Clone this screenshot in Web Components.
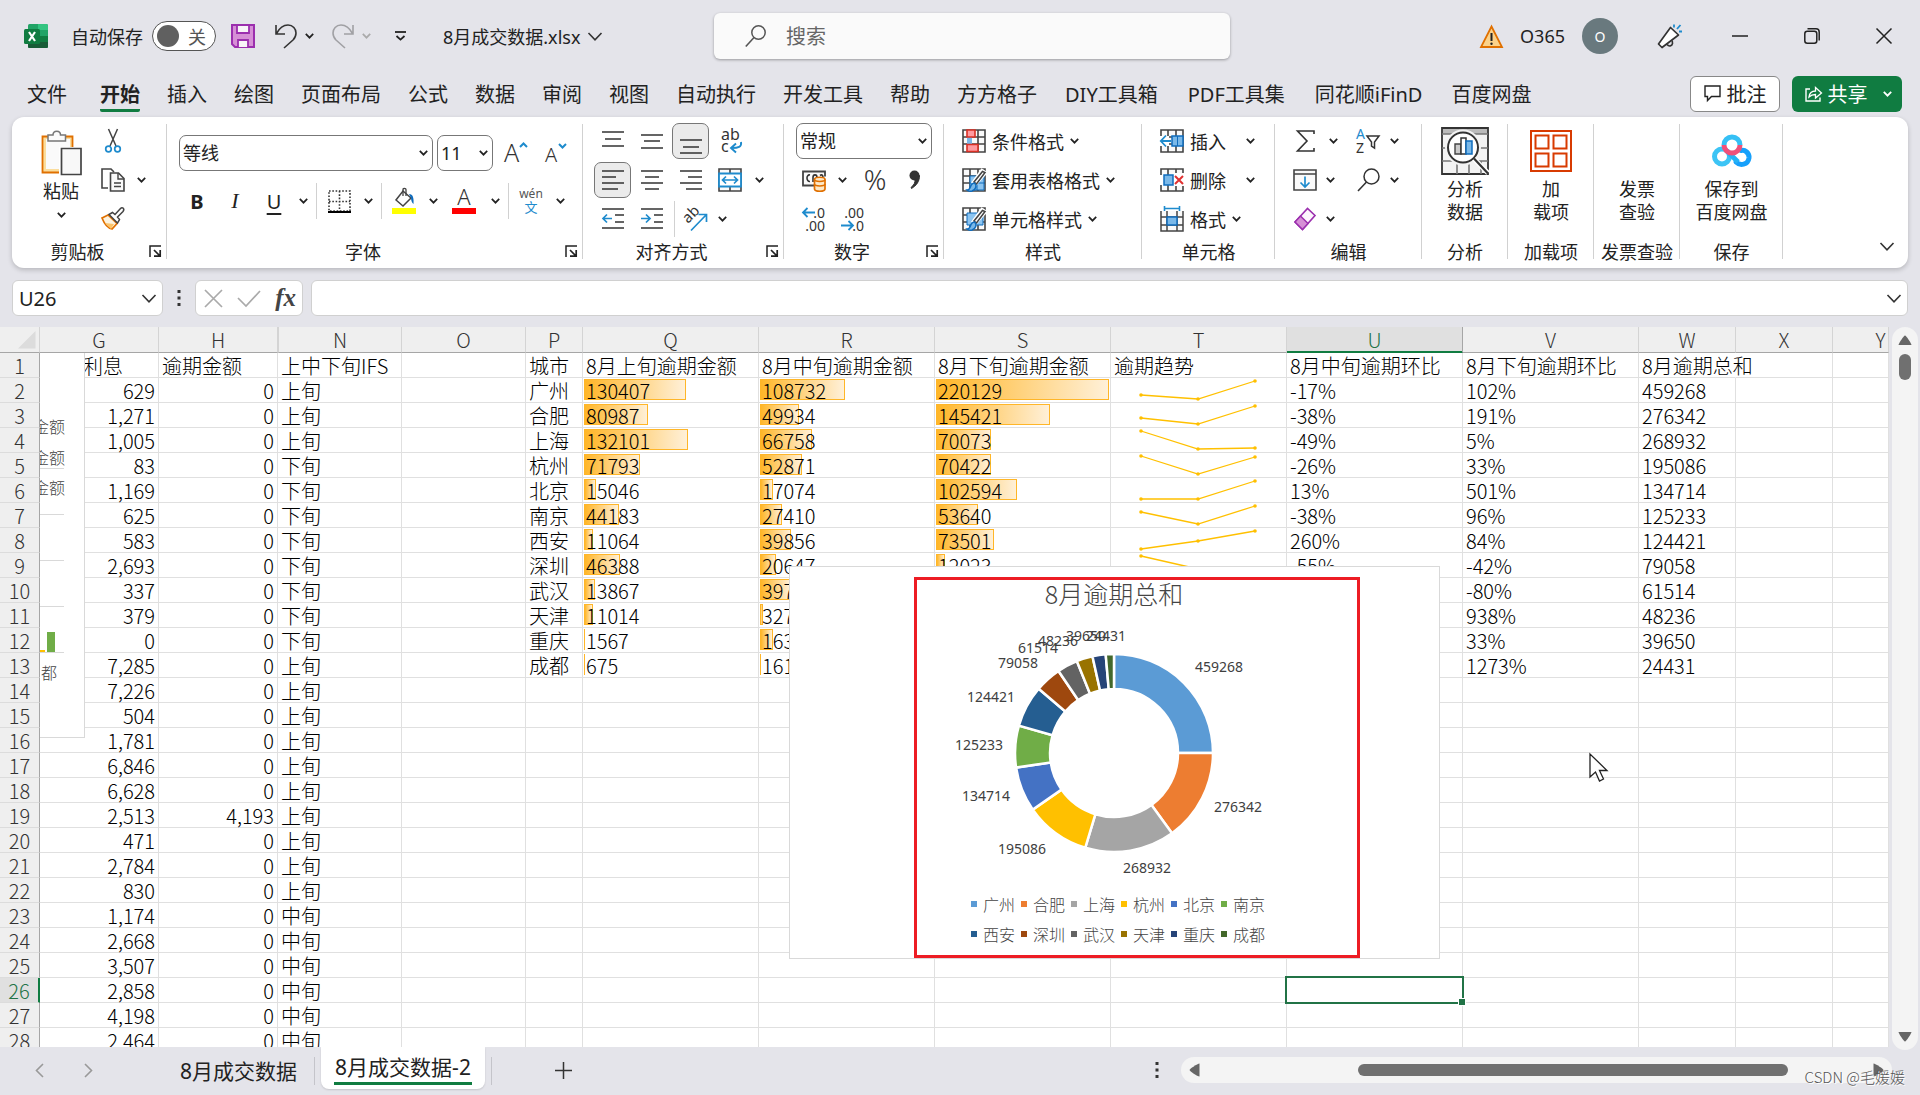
<!DOCTYPE html>
<html lang="zh-CN">
<head>
<meta charset="utf-8">
<title>8月成交数据.xlsx</title>
<style>
html,body{height:100%;margin:0}
body{background:#e4e4ea;overflow:hidden}
</style>
</head>
<body>
<xl-app></xl-app>
<script>
const BASE = `
*{box-sizing:border-box}
button,input,select{font:inherit;color:inherit;margin:0;padding:0;border:0;background:none}
button{display:inline-flex;align-items:center;justify-content:center;flex:none;white-space:nowrap}
svg{display:block;overflow:visible}
`;
function define(tag, css, html) {
  customElements.define(tag, class extends HTMLElement {
    constructor() {
      super();
      this.attachShadow({ mode: 'open' });
    }
    connectedCallback() {
      this.shadowRoot.innerHTML = '<style>' + BASE + css + '</style>' + (typeof html === 'function' ? html(this) : html);
    }
  });
}

/* ---------- icons: [width, height, markup] ---------- */
const grid = '<path d="M1 1h22v22H1z" fill="#fafafa"/><path d="M1 1h22v22H1zM1 8h22M1 15h22M8 1v22M16 1v22" fill="none" stroke="#444" stroke-width="1.6"/>';
const brush = '<path d="M23 5l-9 10-2-1 8-11z" fill="#fff" stroke="#fff" stroke-width="4"/><path d="M23 4.500L14.500 16l-2.500-2L20.500 3.500z" fill="#fff" stroke="#444" stroke-width="1.5"/><path d="M13 15.500c2 2 1 6-3 7.500-2 .5-4 0-5-1 3 0 3-2 4-4.500 1-2 3-3 4-2z" fill="#7ab8e8" stroke="#0f6cbd" stroke-width="1.5"/>';
const lines = (a) => '<path d="' + a.map(([x1, x2, y]) => `M${x1} ${y}H${x2}`).join('') + '" stroke="#333" stroke-width="1.6"/>';
const ICONS = {
  excel: [24, 24, '<rect x="4" y="0" width="20" height="24" rx="1.500" fill="#21a366"/><path d="M14 0h8.500a1.500 1.500 0 0 1 1.500 1.500V6H14z" fill="#33c481"/><path d="M4 6h10v6H4z" fill="#1b9158"/><path d="M14 12h10v6H14z" fill="#107c41"/><path d="M4 12h10v6H4z" fill="#14703c"/><path d="M4 18h20v4.500a1.500 1.500 0 0 1-1.500 1.500h-17A1.500 1.500 0 0 1 4 22.500z" fill="#185c37"/><rect x="0" y="5" width="16" height="15" rx="1.500" fill="#107c41"/><path d="M5 8l6 9M11 8l-6 9" stroke="#fff" stroke-width="2.200"/>'],
  save: [24, 24, '<path d="M1 1h22v22H4l-3-3z" fill="#d68fd6" stroke="#9b2fae" stroke-width="2"/><path d="M6 1h12v8H6z" fill="#f8f4f8" stroke="#9b2fae" stroke-width="1.800"/><path d="M7 23v-7h10v7" fill="#f8f4f8" stroke="#9b2fae" stroke-width="1.800"/>'],
  undo: [22, 24, '<path d="M1 1v9h9M1.500 9.500C5 3 9 1 13 1c5 0 8 4 8 8 0 3-1 5-3 7l-9 8" fill="none" stroke="#333" stroke-width="1.600"/>'],
  redo: [22, 24, '<path d="M21 1v9h-9M20.500 9.500C17 3 13 1 9 1 4 1 1 5 1 9c0 3 1 5 3 7l9 8" fill="none" stroke="#a0a0a4" stroke-width="1.600"/>'],
  chev: [9, 6, '<path d="M.800 .800l3.700 3.900L8.200 .800" fill="none" stroke="#222" stroke-width="1.700"/>'],
  chevdim: [9, 6, '<path d="M.800 .800l3.700 3.900L8.200 .800" fill="none" stroke="#aaa" stroke-width="1.700"/>'],
  chevw: [9, 6, '<path d="M.800 .800l3.700 3.900L8.200 .800" fill="none" stroke="#fff" stroke-width="1.800"/>'],
  chevl: [14, 9, '<path d="M.500 1L7 7.800 13.500 1" fill="none" stroke="#333" stroke-width="1.600"/>'],
  custom: [11, 10, '<path d="M0 1h11" stroke="#222" stroke-width="1.800"/><path d="M1.500 5l4 3.600 4-3.600" fill="none" stroke="#222" stroke-width="1.800"/>'],
  search: [21, 22, '<circle cx="13.500" cy="7.500" r="6.700" fill="none" stroke="#555" stroke-width="1.500"/><path d="M9 12.500L.800 21.500" stroke="#555" stroke-width="1.600"/>'],
  warn: [23, 23, '<path d="M11.500 1.500L22 22H1z" fill="#fbd28a" stroke="#e07000" stroke-width="1.800"/><path d="M11.500 8v8" stroke="#222" stroke-width="2"/><circle cx="11.500" cy="18.700" r="1.200" fill="#222"/>'],
  mega: [25, 25, '<path d="M13.500 3.500l8 7.500L5 23.500 1.500 20z" fill="#fff" stroke="#333" stroke-width="1.700" stroke-linejoin="round"/><path d="M10 20.500c2 2.500 5 1.500 5.500-1l-.300-3" fill="none" stroke="#333" stroke-width="1.600"/><path d="M17 .500v3M23.500 1l-3.500 4M22 7.500h3" stroke="#1e8bcd" stroke-width="1.800"/>'],
  min: [16, 16, '<path d="M0 8h16" stroke="#222" stroke-width="1.500"/>'],
  max: [16, 16, '<rect x=".800" y="3.200" width="12" height="12" rx="2.500" fill="none" stroke="#222" stroke-width="1.500"/><path d="M3.500 .800h8.500c2 0 3.200 1.200 3.200 3.200v8.500" fill="none" stroke="#222" stroke-width="1.500"/>'],
  close: [16, 16, '<path d="M.500 .500l15 15M15.500 .500l-15 15" stroke="#222" stroke-width="1.500"/>'],
  comment: [17, 17, '<path d="M1 1h15v10.500H7.500L3.500 15.500v-4H1z" fill="none" stroke="#222" stroke-width="1.400"/>'],
  share: [17, 17, '<path d="M5 4H1v12h14v-3.500" fill="none" stroke="#fff" stroke-width="1.400"/><path d="M4 12c.500-4 3-6 6.500-6V2.500L16.500 8l-6 5v-3.500C8 9.500 6 10 4 12z" fill="none" stroke="#fff" stroke-width="1.300"/>'],
  paste: [41, 45, '<path d="M1.500 6.500h30v36h-30z" fill="#fbdd9c" stroke="#e07000" stroke-width="1.800"/><path d="M5 9h24v30H5z" fill="#fafafa"/><path d="M7 11V5h5c0-5 7.500-5 7.500 0h5v6z" fill="#fafafa" stroke="#777" stroke-width="1.500"/><path d="M18 17h25v30H18z" fill="#fff"/><path d="M20.500 18.500h19.500v26H20.500z" fill="#f8f8f8" stroke="#444" stroke-width="1.700"/>'],
  cut: [16, 24, '<path d="M3.500 0l7.500 17M12.500 0L5 17" stroke="#444" stroke-width="1.500"/><circle cx="3.500" cy="20" r="2.800" fill="none" stroke="#1e8bcd" stroke-width="1.700"/><circle cx="12.500" cy="20" r="2.800" fill="none" stroke="#1e8bcd" stroke-width="1.700"/>'],
  copy: [24, 24, '<path d="M7 20H1V1h9l3 3" fill="none" stroke="#444" stroke-width="1.600"/><path d="M9.500 5h8l5.500 5.500V23H9.500z" fill="#fafafa" stroke="#444" stroke-width="1.600"/><path d="M17 5v6h6M13 15h7M13 18.500h7" fill="none" stroke="#444" stroke-width="1.400"/>'],
  painter: [24, 23, '<path d="M1 11l6-3 9 8.500-5 5.500C6 21 3 16 1 11z" fill="#fdf3df" stroke="#e07000" stroke-width="1.700"/><path d="M4 16l9 1-3 5z" fill="#fbc46a"/><path d="M8 7.500l3.500-2 2.500 2 5.500-6c2-2 4.500.500 2.500 3l-5.500 5.500 2 2.500-2 3.500z" fill="#fff" stroke="#444" stroke-width="1.500"/>'],
  launcher: [12, 12, '<path d="M1 12V1h11" fill="none" stroke="#222" stroke-width="1.500"/><path d="M5 5l6 6M11.200 5v6.200H5" fill="none" stroke="#222" stroke-width="1.700"/>'],
  up: [24, 24, '<text x="0" y="21" font-size="25" fill="#333" font-weight="300">A</text><path d="M16 6l3.500-3.500L23 6" fill="none" stroke="#1e8bcd" stroke-width="2"/>'],
  down: [22, 24, '<text x="0" y="21" font-size="20" fill="#333" font-weight="300">A</text><path d="M14 3l3.500 3.500L21 3" fill="none" stroke="#1e8bcd" stroke-width="2"/>'],
  borders: [23, 23, '<path d="M1 1h21v20H1zM1 11.500h21M11.500 1v20" fill="none" stroke="#333" stroke-width="1.600" stroke-dasharray="1.600 1.700"/><path d="M0 22h23" stroke="#000" stroke-width="2"/>'],
  fill: [24, 26, '<path d="M11 3l8 7-8 8-7-6z" fill="#fff" stroke="#444" stroke-width="1.500"/><path d="M11 8V1.500c0-1.500 3-1.500 3 0V8" fill="none" stroke="#444" stroke-width="1.300"/><path d="M17 6c4 0 5 4 4.500 10-1.500-1-2.500-4-2.500-6z" fill="#0f6cbd"/><path d="M0 20h24v6H0z" fill="#ff0"/>'],
  color: [24, 26, '<text x="12" y="17" font-size="22" fill="#333" font-weight="300" text-anchor="middle">A</text><path d="M0 20h24v6H0z" fill="#f00"/>'],
  phonetic: [22, 26, '<text x="11" y="10" font-size="12" fill="#555" text-anchor="middle">wén</text><text x="11" y="24" font-size="13" fill="#1e8bcd" text-anchor="middle">文</text>'],
  vtop: [22, 24, lines([[0, 22, 3], [3, 19, 10], [0, 22, 17]])],
  vmid: [22, 24, lines([[0, 22, 6], [3, 19, 12], [0, 22, 19]])],
  vbot: [22, 24, lines([[0, 22, 11], [3, 19, 18], [0, 22, 24]])],
  hleft: [22, 24, lines([[0, 22, 3], [0, 14, 9], [0, 22, 15], [0, 16, 21]])],
  hmid: [22, 24, lines([[0, 22, 3], [4, 18, 9], [0, 22, 15], [4, 18, 21]])],
  hright: [22, 24, lines([[0, 22, 3], [8, 22, 9], [0, 22, 15], [6, 22, 21]])],
  outdent: [22, 24, lines([[0, 22, 2], [13, 22, 8], [13, 22, 15], [0, 22, 21]]) + '<path d="M10 11.500H1M5 7.500l-4 4 4 4" fill="none" stroke="#1e8bcd" stroke-width="1.700"/>'],
  indent: [22, 24, lines([[0, 22, 2], [13, 22, 8], [13, 22, 15], [0, 22, 21]]) + '<path d="M0 11.500h9M5 7.500l4 4-4 4" fill="none" stroke="#1e8bcd" stroke-width="1.700"/>'],
  wrap: [22, 26, '<text x="1" y="12" font-size="16" fill="#333">ab</text><text x="1" y="24" font-size="16" fill="#333">c</text><path d="M21 14c1 5-3 6-9 6M16 15.500L11 20l5 4.500" fill="none" stroke="#1e8bcd" stroke-width="1.900"/>'],
  merge: [24, 24, '<path d="M1 1h22v22H1zM12 1v22" fill="#fafafa" stroke="#444" stroke-width="1.600"/><path d="M1 5.500h22v13H1z" fill="#fff" stroke="#1e8bcd" stroke-width="1.800"/><path d="M4.500 12h15M8 8.500L4.500 12 8 15.500M16 8.500l3.500 3.500-3.500 3.500" fill="none" stroke="#1e8bcd" stroke-width="1.700"/>'],
  orient: [24, 24, '<text x="0" y="0" font-size="15" fill="#333" transform="translate(5 17) rotate(-45)">ab</text><path d="M8 23.500L23 8M15.500 7.500H23.500V15" fill="none" stroke="#1e8bcd" stroke-width="1.700"/>'],
  money: [24, 24, '<path d="M12 17.500H1v-14h22v5" fill="#fafafa" stroke="#444" stroke-width="1.800"/><path d="M8 7c-4-1-4 7 0 6.500M11 14V9.500C11 6 15 6 15 9.500M18 7.500c2-1.500 3 0 3 2" fill="none" stroke="#333" stroke-width="1.600"/><path d="M12.500 11.500c0-3 10.500-3 10.500 0v9.500c0 3-10.500 3-10.500 0z" fill="#fde9c8" stroke="#e07000" stroke-width="1.700"/><path d="M12.500 11.500c0 2.500 10.500 2.500 10.500 0M12.500 16c0 2.500 10.500 2.500 10.500 0" fill="none" stroke="#e07000" stroke-width="1.500"/>'],
  percent: [24, 24, '<text x="12" y="22" font-size="28" fill="#333" font-weight="300" text-anchor="middle">%</text>'],
  comma: [12, 20, '<circle cx="5.500" cy="5.500" r="5" fill="#333"/><path d="M10.500 5.500c0 6-3 10-8 13l-.500-1c3-2.500 4.500-5 4-9z" fill="#333" stroke="#333"/>'],
  decup: [24, 26, '<text x="23" y="12" font-size="14" fill="#333" text-anchor="end">.0</text><text x="23" y="25" font-size="14" fill="#333" text-anchor="end">.00</text><path d="M13 6.500H1M5.500 2L1 6.500 5.500 11" fill="none" stroke="#1e8bcd" stroke-width="1.800"/>'],
  decdown: [24, 26, '<text x="23" y="12" font-size="14" fill="#333" text-anchor="end">.00</text><text x="23" y="25" font-size="14" fill="#333" text-anchor="end">.0</text><path d="M0 19.500h12M7.500 15l4.500 4.500-4.500 4.500" fill="none" stroke="#1e8bcd" stroke-width="1.800"/>'],
  cond: [24, 24, grid + '<path d="M5 8h5v7H5z" fill="#7ab8e8"/><path d="M5 1h8v7H5zM5 15.500h11v7H5z" fill="#ff9aa0" stroke="#d93025" stroke-width="1.600"/>'],
  tblfmt: [24, 24, grid + '<path d="M8 8h14v14H8z" fill="#8cc4f0" stroke="#0f6cbd"/><path d="M8 15h14M15 8v14" stroke="#0f6cbd"/>' + brush],
  cellstyle: [24, 24, grid + '<path d="M5 6h16v12H5z" fill="#8cc4f0" stroke="#0f6cbd"/>' + brush],
  ins: [24, 24, grid + '<path d="M0 7h9v10H0z" fill="#fff"/><path d="M12 7h11v10H12z" fill="#7ab8e8" stroke="#0f6cbd" stroke-width="1.500"/><path d="M17.500 7v10" stroke="#0f6cbd"/><path d="M11 12H1M6 6.500L.800 12 6 17.500" fill="none" stroke="#1e8bcd" stroke-width="1.800"/>'],
  del: [24, 24, grid + '<path d="M13 5h11v13H13zM0 7h4v10H0z" fill="#fff"/><path d="M4 7h9v10H4z" fill="#7ab8e8" stroke="#0f6cbd" stroke-width="1.500"/><path d="M15 8l8 8M23 8l-8 8" stroke="#e03131" stroke-width="2"/>'],
  fmt: [24, 26, '<path d="M1 5h22v20H1z" fill="#fafafa"/><path d="M1 5v20h22V5M1 11h22M1 19h22M7 5v20M17 5v20" fill="none" stroke="#444" stroke-width="1.500"/><path d="M7 11h10v8H7z" fill="#7ab8e8" stroke="#0f6cbd" stroke-width="1.500"/><path d="M5 2.500h14M4.500 0v5M19.500 0v5" stroke="#1e8bcd" stroke-width="1.600"/>'],
  sum: [19, 22, '<path d="M18 4V1H1.500L11 11 1.500 21H18v-3" fill="none" stroke="#333" stroke-width="1.600"/>'],
  sort: [24, 26, '<text x="0" y="11" font-size="14" fill="#1e8bcd">A</text><text x="0" y="25" font-size="14" fill="#333">Z</text><path d="M11 8h12l-4.500 6v6l-3-2v-4z" fill="none" stroke="#333" stroke-width="1.500"/>'],
  filld: [24, 22, '<path d="M1 1h22v20H1zM1 5h22" fill="#fafafa" stroke="#444" stroke-width="1.600"/><path d="M12 7.500V18M7.500 13.500L12 18l4.500-4.500" fill="none" stroke="#1e8bcd" stroke-width="1.700"/>'],
  find: [23, 24, '<circle cx="14.500" cy="8.500" r="7.500" fill="none" stroke="#333" stroke-width="1.500"/><path d="M9.500 14L1 23" stroke="#333" stroke-width="1.600"/>'],
  eraser: [22, 24, '<path d="M1 15L13.500 1.500l7.500 7L8.500 22.500z" fill="#fdf6fd" stroke="#9b2fae" stroke-width="1.600"/><path d="M1 15l5.500-6 7.500 7.500-5.500 6z" fill="#d68fd6" stroke="#9b2fae" stroke-width="1.500"/>'],
  analyze: [48, 48, '<path d="M1 1h46v46H1z" fill="#f3f3f3" stroke="#333" stroke-width="1.800"/><path d="M2 2h44v5H2z" fill="#bbb"/><path d="M1 7h46M1 21h46M1 34h46M16 34v13M28 34v13M40 34v13" stroke="#777" stroke-width="1.600"/><circle cx="22" cy="20.500" r="15.500" fill="#fff" stroke="#f3f3f3" stroke-width="5"/><circle cx="22" cy="20.500" r="15" fill="#fff" stroke="#333" stroke-width="2"/><path d="M33 32l14 14" stroke="#fff" stroke-width="5"/><path d="M33 31.500l14 15" stroke="#333" stroke-width="2.200"/><path d="M14 17h6v10h-6z" fill="#ccc" stroke="#444" stroke-width="1.400"/><path d="M20 11h5v16h-5z" fill="#fff" stroke="#333" stroke-width="1.500"/><path d="M25 14h6v13h-6z" fill="#7ab8e8" stroke="#0f6cbd" stroke-width="1.500"/>'],
  addins: [42, 42, '<path d="M1 1h40v40H1z" fill="#fff" stroke="#d83b01" stroke-width="2"/><path d="M5.500 5.500h13v13h-13zM23.500 5.500h13v13h-13zM5.500 23.500h13v13h-13zM23.500 23.500h13v13h-13z" fill="#fff" stroke="#d83b01" stroke-width="2"/>'],
  baidu: [40, 32, '<circle cx="10" cy="21.500" r="7.500" fill="none" stroke="#3cc4f5" stroke-width="5"/><path d="M24 27c4 4 12 3 13-4 .500-5-4-8.500-8-7.500" fill="none" stroke="#16a0fb" stroke-width="5" stroke-linecap="round"/><path d="M15 16l11 11" stroke="#25b2f5" stroke-width="5"/><path d="M12 10a8 8 0 0 1 16 0" fill="none" stroke="#35c0f5" stroke-width="5"/><path d="M12 10a8 8 0 0 0 16 0" fill="none" stroke="#f0507a" stroke-width="5"/>'],
  blank: [40, 32, ''],
  x: [19, 19, '<path d="M1 1l17 17M18 1L1 18" stroke="#aaa" stroke-width="1.700"/>'],
  check: [24, 17, '<path d="M1 8l8 8L23 1" fill="none" stroke="#aaa" stroke-width="1.700"/>'],
  dots: [4, 16, '<path d="M.500 0h3v3h-3zM.500 6.500h3v3h-3zM.500 13h3v3h-3z" fill="#333"/>'],
  prev: [9, 15, '<path d="M8 1L1.500 7.500 8 14" fill="none" stroke="#999" stroke-width="1.600"/>'],
  next: [9, 15, '<path d="M1 1l6.500 6.500L1 14" fill="none" stroke="#999" stroke-width="1.600"/>'],
  plus: [17, 17, '<path d="M8.500 0v17M0 8.500h17" stroke="#333" stroke-width="1.500"/>'],
  aup: [14, 11, '<path d="M7 .500c1 0 6.500 8 6.500 9.500H.500C.500 8.500 6 .500 7 .500z" fill="#666"/>'],
  adown: [14, 11, '<path d="M7 10.500C6 10.500.500 2.500.500 1h13c0 1.500-5.500 9.500-6.500 9.500z" fill="#666"/>'],
  aleft: [11, 14, '<path d="M.500 7C.500 6 8.500.500 10.500.500v13C8.500 13.500.500 8 .500 7z" fill="#666"/>'],
  aright: [11, 14, '<path d="M10.500 7C10.500 6 2.500.500.500.500v13C2.500 13.500 10.500 8 10.500 7z" fill="#666"/>'],
  corner: [18, 18, '<path d="M17.500 0v17.500H0z" fill="#dcdcdc"/>'],
  cursor: [19, 29, '<path d="M1 1v23l5.500-5 4 9 4-2-4-8.500h7.500z" fill="#fff" stroke="#222" stroke-width="1.300"/>']
};
define('xl-icon', ':host{display:inline-block;flex:none}', (el) => {
  const [w, h, body] = ICONS[el.getAttribute('name')];
  return `<svg width="${w}" height="${h}" viewBox="0 0 ${w} ${h}" aria-hidden="true">${body}</svg>`;
});
const ic = (n) => `<xl-icon name="${n}"></xl-icon>`;

/* ---------- title bar ---------- */
define('xl-titlebar', `
:host{display:flex;align-items:center;height:72px;padding-left:24px;font-size:18px;color:#222}
.left,.right{display:flex;align-items:center;flex:1 1 0}
.auto{display:flex;align-items:center;gap:9px;margin-left:23px}
.switch{position:relative;display:flex;align-items:center;justify-content:flex-end;width:64px;height:30px;padding-right:9px;border:1px solid #555;border-radius:15px;background:#fff;color:#555}
.switch input{appearance:none;position:absolute;left:4px;top:3px;width:22px;height:22px;border-radius:50%;background:#606060}
.save{margin-left:15px}.undo{margin-left:20px}.redo{margin-left:11px}
.c{width:24px}
.cust{margin-left:6px;width:32px}
.name{margin-left:27px;gap:8px}
.search{display:flex;align-items:center;gap:20px;width:516px;height:46px;padding-left:31px;border-radius:6px;background:#fafafa;box-shadow:0 1px 3px #0005;font-size:20px}
.search input{flex:1;min-width:0;outline:0;color:#555}
.search input::placeholder{color:#666;opacity:1}
.right{justify-content:flex-end}
.user{display:flex;align-items:center;gap:17px;margin-right:39px}
.av{display:flex;align-items:center;justify-content:center;width:36px;height:36px;border-radius:50%;background:#69797e;color:#fff;font-size:14px}
.win{width:72px;height:48px}
.win:last-child{width:36px;margin:0 18px}
.mega{margin-right:22px}
`, `
<div class="left">${ic('excel')}
<label class="auto">自动保存<span class="switch"><input type="checkbox" role="switch">关</span></label>
<button class="save" aria-label="保存">${ic('save')}</button>
<button class="undo" aria-label="撤消">${ic('undo')}</button><button class="c" aria-label="撤消列表">${ic('chev')}</button>
<button class="redo" aria-label="恢复">${ic('redo')}</button><button class="c" aria-label="恢复列表">${ic('chevdim')}</button>
<button class="cust" aria-label="自定义">${ic('custom')}</button>
<button class="name">8月成交数据.xlsx ${ic('chevl')}</button></div>
<label class="search" aria-label="搜索">${ic('search')}<input type="text" placeholder="搜索"></label>
<div class="right"><div class="user">${ic('warn')}<span>O365</span><span class="av">O</span></div>
<button class="mega" aria-label="即将推出">${ic('mega')}</button>
<button class="win" aria-label="最小化">${ic('min')}</button><button class="win" aria-label="还原">${ic('max')}</button><button class="win" aria-label="关闭">${ic('close')}</button></div>`);

/* ---------- tab strip ---------- */
const TABS = ['文件', '开始', '插入', '绘图', '页面布局', '公式', '数据', '审阅', '视图', '自动执行', '开发工具', '帮助', '方方格子', 'DIY工具箱', 'PDF工具集', '同花顺iFinD', '百度网盘'];
define('xl-tabs', `
:host{display:flex;align-items:center;height:45px;padding:0 18px 2px 27px;font-size:20px;color:#222}
nav{display:flex;align-items:center;gap:27px;flex:1}
a{display:flex;align-items:center;height:34px;color:inherit;text-decoration:none;white-space:nowrap}
a:first-child{margin-right:6px}
a.on{height:36px;font-weight:700;border-bottom:3px solid #107c41;border-top:3px solid transparent;border-radius:2px}
.latin{padding:0 2px 0 1px}
button{height:36px;border-radius:6px;gap:6px}
.cm{width:90px;border:1px solid #888;background:#fff;margin-right:12px}
.sh{width:110px;background:#107c41;color:#fff;padding-left:2px}
.sh xl-icon:last-child{margin-left:9px}
`, `<nav>${TABS.map((t, i) => `<a href="#"${i === 1 ? ' class="on"' : /[A-Z]/.test(t) ? ' class="latin"' : ''}>${t}</a>`).join('')}</nav>
<button class="cm">${ic('comment')}批注</button><button class="sh">${ic('share')}共享${ic('chevw')}</button>`);

/* ---------- ribbon ---------- */
define('rb-group', `
:host{display:flex;flex-direction:column;flex:none;width:var(--w);height:151px;padding-top:4px;background:linear-gradient(#d1d1d1,#d1d1d1) right 7px/1px 135px no-repeat}
.body{height:117px}
.foot{display:flex;align-items:center;height:26px}
.foot span{flex:1;text-align:center;white-space:nowrap}
.foot button{width:24px}
`, (el) => `<div class="body"><slot></slot></div><div class="foot"><span>${el.getAttribute('label')}</span>${el.hasAttribute('launcher') ? `<button aria-label="${el.getAttribute('label')}设置">${ic('launcher')}</button>` : ''}</div>`);

const b = (icon, w, label, cls = '') => `<button class="w${w} ${cls}" aria-label="${label}">${ic(icon)}</button>`;
const c = (w = 20) => b('chev', w, '更多');
const big = (icon, l1, l2) => `<button class="big"><span class="pic">${ic(icon)}</span>${l1}<br>${l2}</button>`;
define('xl-ribbon', `
:host{display:flex;margin:0 12px 0 12px;height:151px;border-radius:12px;background:#fff;box-shadow:0 2px 5px #0003;font-size:18px;color:#222;overflow:visible}
.row{display:flex;align-items:center;height:39px}
.p10{padding-left:10px}.p12{padding-left:12px}.p18{padding-left:18px}
.w14{width:14px}.w20{width:20px}.w28{width:28px}.w34{width:34px}.w36{width:36px}.w38{width:38px}.w39{width:39px}.w40{width:40px}.w42{width:42px}.w46{width:46px}
.on{position:relative}
.on::before{content:"";position:absolute;inset:-6px 1px;border:1px solid #777;border-radius:7px;background:#ebebeb}
.on xl-icon{position:relative}
i.sep{width:7px;height:36px;background:linear-gradient(#d1d1d1,#d1d1d1) center/1px 100% no-repeat}
.clip{display:flex;padding-left:27px}
.paste{flex-direction:column;justify-content:flex-start;width:44px;padding-top:9px}
.paste span{line-height:33px}
.paste span+xl-icon{margin-top:4px}
.side{display:flex;flex-direction:column;padding-left:9px}
.font{padding:14px 0 0 12px}
.font .row{height:36px;margin-bottom:13px}
.font .row:first-child{height:35px;gap:4px}
.sel{position:relative;display:flex;align-items:center}
.sel select{appearance:none;width:100%;height:36px;padding-left:3px;border:1px solid #777;border-radius:7px;background:#fff;outline:0}
.sel xl-icon{position:absolute;right:5px;pointer-events:none}
.s1{width:254px}.s2{width:56px}.s3{width:136px}
.bold{font-weight:700;font-size:20px}.ital{font-family:"Liberation Serif",serif;font-style:italic;font-size:22px}.und{font-size:20px;text-decoration:underline;text-underline-offset:4px}
.t{gap:6px}
.gap{margin-left:6px}
.ti{gap:6px;width:76px;justify-content:flex-start}
.big{display:block;width:100%;padding-top:6px;line-height:23px;text-align:center}
.pic{display:flex;align-items:center;justify-content:center;height:48px;margin-bottom:3px}
.end{display:flex;flex:1;align-items:flex-end;justify-content:flex-end;padding:0 14px 17px 0}
`, `
<rb-group label="剪贴板" launcher style="--w:155px"><div class="clip"><button class="paste">${ic('paste')}<span>粘贴</span>${ic('chev')}</button>
<div class="side"><div class="row">${b('cut', 42, '剪切')}</div><div class="row">${b('copy', 42, '复制')}${c(14)}</div><div class="row">${b('painter', 42, '格式刷')}</div></div></div></rb-group>
<rb-group label="字体" launcher style="--w:416px"><div class="font"><div class="row"><span class="sel s1"><select aria-label="字体"><option>等线</option></select>${ic('chev')}</span><span class="sel s2"><select aria-label="字号"><option>11</option></select>${ic('chev')}</span>${b('up', 38, '增大字号')}${b('down', 34, '减小字号')}</div>
<div class="row"><button class="w36 bold">B</button><button class="w40 ital">I</button><button class="w38 und">U</button>${c()}<i class="sep"></i>${b('borders', 38, '边框')}${c()}<i class="sep"></i>${b('fill', 38, '填充颜色')}${c()}${b('color', 42, '字体颜色')}${c()}<i class="sep"></i>${b('phonetic', 38, '拼音')}${c()}</div></div></rb-group>
<rb-group label="对齐方式" launcher style="--w:201px"><div class="p10"><div class="row">${b('vtop', 39, '顶端对齐')}${b('vmid', 39, '垂直居中')}${b('vbot', 39, '底端对齐', 'on')}${b('wrap', 42, '自动换行')}</div>
<div class="row">${b('hleft', 39, '左对齐', 'on')}${b('hmid', 39, '居中')}${b('hright', 39, '右对齐')}${b('merge', 39, '合并后居中')}${c()}</div>
<div class="row">${b('outdent', 39, '减少缩进')}${b('indent', 39, '增加缩进')}<i class="sep"></i>${b('orient', 34, '方向')}${c()}</div></div></rb-group>
<rb-group label="数字" launcher style="--w:160px"><div class="p12"><div class="row"><span class="sel s3"><select aria-label="数字格式"><option>常规</option></select>${ic('chev')}</span></div>
<div class="row">${b('money', 36, '会计数字格式')}${c()}${b('percent', 46, '百分比样式')}${b('comma', 34, '千位分隔样式')}</div>
<div class="row">${b('decup', 36, '增加小数位数')}${b('decdown', 42, '减少小数位数')}</div></div></rb-group>
<rb-group label="样式" style="--w:198px"><div class="p18"><div class="row"><button class="t">${ic('cond')}条件格式${ic('chev')}</button></div><div class="row"><button class="t">${ic('tblfmt')}套用表格格式${ic('chev')}</button></div><div class="row"><button class="t">${ic('cellstyle')}单元格样式${ic('chev')}</button></div></div></rb-group>
<rb-group label="单元格" style="--w:133px"><div class="p18"><div class="row"><button class="ti">${ic('ins')}插入</button>${c(28)}</div><div class="row"><button class="ti">${ic('del')}删除</button>${c(28)}</div><div class="row"><button class="t">${ic('fmt')}格式${ic('chev')}</button></div></div></rb-group>
<rb-group label="编辑" style="--w:147px"><div class="p12"><div class="row">${b('sum', 36, '求和')}${c()}${b('sort', 38, '排序和筛选', 'gap')}${c(14)}</div><div class="row">${b('filld', 36, '填充')}${c(14)}<span class="gap"></span>${b('find', 38, '查找和选择', 'gap')}${c(14)}</div><div class="row">${b('eraser', 36, '清除')}${c(14)}</div></div></rb-group>
<rb-group label="分析" style="--w:86px">${big('analyze', '分析', '数据')}</rb-group>
<rb-group label="加载项" style="--w:86px">${big('addins', '加', '载项')}</rb-group>
<rb-group label="发票查验" style="--w:86px">${big('blank', '发票', '查验')}</rb-group>
<rb-group label="保存" style="--w:103px">${big('baidu', '保存到', '百度网盘')}</rb-group>
<div class="end"><button aria-label="折叠功能区">${ic('chevl')}</button></div>`);

/* ---------- formula bar ---------- */
define('xl-formula', `
:host{display:flex;align-items:center;height:36px;margin:12px 12px 11px;font-size:20px;color:#222}
.box{display:flex;align-items:center;height:36px;border:1px solid #d0d0d0;border-radius:6px;background:#fff}
.name{width:151px;padding:0 6px}
input{flex:1;min-width:0;height:100%;outline:0}
.dots{width:32px}
.fx{width:108px;justify-content:space-between;padding:0 6px 0 8px;margin-right:8px}
.fx .f{font:italic 700 25px/30px "Liberation Serif",serif;color:#444}
.bar{flex:1;padding:0 6px 0 8px}
`, `<label class="box name"><input type="text" value="U26" aria-label="名称框">${ic('chevl')}</label>
<button class="dots" aria-label="调整">${ic('dots')}</button>
<div class="box fx"><button aria-label="取消">${ic('x')}</button><button aria-label="输入">${ic('check')}</button><button class="f">fx</button></div>
<label class="box bar"><input type="text" aria-label="编辑栏">${ic('chevl')}</label>`);

/* ---------- sheet ---------- */
const COLS = [['G', 119], ['H', 119], ['N', 124], ['O', 124], ['P', 57], ['Q', 176], ['R', 176], ['S', 176], ['T', 176], ['U', 176], ['V', 176], ['W', 97], ['X', 97], ['Y', 0]];
const INTEREST = ['629', '1,271', '1,005', '83', '1,169', '625', '583', '2,693', '337', '379', '0', '7,285', '7,226', '504', '1,781', '6,846', '6,628', '2,513', '471', '2,784', '830', '1,174', '2,668', '3,507', '2,858', '4,198', '2,464'];
const CITY = [
  ['广州', 130407, 108732, 220129, '-17%', '102%', 459268],
  ['合肥', 80987, 49934, 145421, '-38%', '191%', 276342],
  ['上海', 132101, 66758, 70073, '-49%', '5%', 268932],
  ['杭州', 71793, 52871, 70422, '-26%', '33%', 195086],
  ['北京', 15046, 17074, 102594, '13%', '501%', 134714],
  ['南京', 44183, 27410, 53640, '-38%', '96%', 125233],
  ['西安', 11064, 39856, 73501, '260%', '84%', 124421],
  ['深圳', 46388, 20647, 12023, '-55%', '-42%', 79058],
  ['武汉', 13867, 39706, null, '', '-80%', 61514],
  ['天津', 11014, 3271, null, '', '938%', 48236],
  ['重庆', 1567, 16345, null, '', '33%', 39650],
  ['成都', 675, 1613, null, '', '1273%', 24431]];
const HEAD = { G: '利息', H: '逾期金额', N: '上中下旬IFS', P: '城市', Q: '8月上旬逾期金额', R: '8月中旬逾期金额', S: '8月下旬逾期金额', T: '逾期趋势', U: '8月中旬逾期环比', V: '8月下旬逾期环比', W: '8月逾期总和' };
const bar = (v) => v == null ? '' : `<span class="bar${v < 2000 ? ' thin' : ''}" style="width:${Math.max(1, Math.round(173 * v / 220129))}px"></span><span class="v">${v}</span>`;
function spark(a) {
  if (a.some((v) => v == null)) return '';
  const lo = Math.min(...a), hi = Math.max(...a);
  const p = a.map((v, i) => [30 + 57 * i, Math.round(21 - 18 * (v - lo) / (hi - lo))]);
  return `<svg width="175" height="24"><polyline points="${p.join(' ')}" fill="none" stroke="#ffc000" stroke-width="1.300"/>${p.map(([x, y]) => `<circle cx="${x}" cy="${y}" r="1.800" fill="#ffc000"/>`).join('')}</svg>`;
}
function cell(col, r) {
  if (r === 1) return HEAD[col] || '';
  const d = CITY[r - 2];
  switch (col) {
    case 'G': return INTEREST[r - 2];
    case 'H': return r === 19 ? '4,193' : '0';
    case 'N': return r < 5 ? '上旬' : r < 13 ? '下旬' : r < 23 ? '上旬' : '中旬';
  }
  if (!d) return '';
  switch (col) {
    case 'P': return d[0];
    case 'Q': return bar(d[1]);
    case 'R': return bar(d[2]);
    case 'S': return bar(d[3]);
    case 'T': return spark(d.slice(1, 4));
    case 'U': return d[4];
    case 'V': return d[5];
    case 'W': return String(d[6]);
  }
  return '';
}
define('xl-grid', `
:host{display:block;position:relative;flex:1;min-width:0;overflow:hidden;background:#fff;font:300 20px/24px "Noto Sans CJK SC",sans-serif;color:#000}
table{width:100%;table-layout:fixed;border-collapse:separate;border-spacing:0}
th{height:25px;padding:0;font-weight:300;color:#333;background:#efefef}
thead th{height:26px;line-height:25px;border-bottom:1px solid #a6a6a6;border-right:1px solid #d4d4d4}
thead xl-icon{display:block;margin:4px 0 3px 18px}
tbody th{padding-top:2px;line-height:22px;border-right:1px solid #a6a6a6;border-bottom:1px solid #dcdcdc}
thead th.on{background:#e0e0e0;color:#217346;border-bottom-color:#107c41;box-shadow:inset 0 -1px #107c41;border-right-color:#a6a6a6}
tbody th.on{background:#e0e0e0;color:#217346;border-right:2px solid #107c41}
thead th.dbl{border-left:1px solid #d4d4d4}
td{position:relative;height:25px;padding:2px 3px 0;border-right:1px solid #e0e0e0;border-bottom:1px solid #e0e0e0;white-space:nowrap;line-height:22px}
td.r{text-align:right}
td.g1{padding-left:43px}
td.open{border-right-color:transparent}
td.sp{padding:0}
.bar{position:absolute;left:1px;top:1px;height:21px;border:1px solid #ffb628;background:linear-gradient(90deg,#ffb628,#fff0d8)}
.thin{border-width:0 0 0 1px}
.v{position:relative}
.sel{position:absolute;z-index:1;inset:-2px;border:2px solid #217346}
.sel::after{content:"";position:absolute;right:-3px;bottom:-3px;width:6px;height:6px;background:#217346;outline:1px solid #fff}
::slotted(*){position:absolute;z-index:2}
`, () => `<table><colgroup><col style="width:40px">${COLS.map(([, w]) => `<col${w ? ` style="width:${w}px"` : ''}>`).join('')}</colgroup>
<thead><tr><th aria-label="全选">${ic('corner')}</th>${COLS.map(([n]) => `<th class="${n === 'U' ? 'on' : n === 'N' ? 'dbl' : ''}">${n === 'Y' ? '<div style="padding-left:40px">Y</div>' : n}</th>`).join('')}</tr></thead>
<tbody>${Array.from({ length: 28 }, (_, i) => i + 1).map((r) => `<tr><th${r === 26 ? ' class="on"' : ''}>${r}</th>${COLS.map(([n]) => {
  const k = [];
  if (r > 1 && (n === 'G' || n === 'H')) k.push('r');
  if (r === 1 && n === 'G') k.push('g1');
  if (r === 1 && n === 'W') k.push('open');
  if (n === 'T' && r > 1) k.push('sp');
  return `<td class="${k.join(' ')}">${cell(n, r)}${n === 'U' && r === 26 ? '<span class="sel"></span>' : ''}</td>`;
}).join('')}</tr>`).join('')}</tbody></table><slot></slot>`);

/* ---------- chart floating over column G ---------- */
define('xl-sidechart', `
:host{display:block;width:45px;height:385px;overflow:hidden;background:#fff;border:1px solid #d9d9d9;border-left:0;border-top:0;font:300 16px/20px "Noto Sans CJK SC",sans-serif;color:#595959}
svg text{fill:#444}
`, `<svg width="44" height="384"><path d="M0 115.500h24M0 161.500h24M0 207.500h24M0 253.500h24M0 299.500h24" stroke="#d9d9d9"/>
<text x="-7" y="80">金额</text><text x="-7" y="111">金额</text><text x="-7" y="141">金额</text><path d="M7 279h8v20H7z" fill="#70ad47"/><path d="M0 297h5v2H0z" fill="#ffc000"/><text x="1" y="326">都</text></svg>`);

/* ---------- doughnut chart ---------- */
const PAL = ['#5b9bd5', '#ed7d31', '#a5a5a5', '#ffc000', '#4472c4', '#70ad47', '#255e91', '#9e480e', '#636363', '#997300', '#264478', '#43682b'];
const LABELPOS = [[429, 100], [448, 240], [357, 301], [232, 282], [196, 229], [189, 178], [201, 130], [228, 96], [248, 81], [268, 74], [296, 69], [316, 69]];
define('xl-doughnut', `
:host{display:block;width:651px;height:393px;background:#fff;border:1px solid #d9d9d9;color:#444}
.plot{height:322px}
.plot svg{width:100%;height:100%}
.title{font:300 25px/30px "Noto Sans CJK SC",sans-serif;fill:#444}
.lab{font:400 14px/20px "Noto Sans",sans-serif;fill:#404040}
ul{display:grid;grid-template-columns:repeat(6,50px);grid-auto-rows:30px;margin:0 0 0 181px;padding:0;list-style:none;font:300 16px/30px "Noto Sans CJK SC",sans-serif}
li{display:flex;align-items:center;gap:6px;white-space:nowrap}
li::before{content:"";width:6px;height:6px;background:var(--k)}
.frame{position:absolute;left:124px;top:10px;width:446px;height:381px;border:3px solid #ed1c24}
`, () => {
  const total = CITY.reduce((s, d) => s + d[6], 0), cx = 324, cy = 186, R = 99, r = 64;
  let a = 0;
  const pt = (rad, t) => [cx + rad * Math.sin(t), cy - rad * Math.cos(t)].map((v) => v.toFixed(1)).join(' ');
  const arcs = CITY.map((d, i) => {
    const e = a + 2 * Math.PI * d[6] / total;
    const p = `<path d="M${pt(R, a)}A${R} ${R} 0 0 1 ${pt(R, e)}L${pt(r, e)}A${r} ${r} 0 0 0 ${pt(r, a)}Z" fill="${PAL[i]}" stroke="#fff" stroke-width="2.500"/>`;
    a = e;
    return p;
  }).join('');
  return `<div class="plot"><svg><text class="title" x="324" y="37" text-anchor="middle">8月逾期总和</text>${arcs}${CITY.map((d, i) => `<text class="lab" text-anchor="middle" x="${LABELPOS[i][0]}" y="${LABELPOS[i][1] + 5}">${d[6]}</text>`).join('')}</svg></div>
<ul>${CITY.map((d, i) => `<li style="--k:${PAL[i]}">${d[0]}</li>`).join('')}</ul><div class="frame"></div>`;
});

/* ---------- scroll bars and sheet tabs ---------- */
define('xl-vscroll', `
:host{display:flex;flex-direction:column;align-items:center;width:26px;margin:0 2px -3px 3px;padding:8px 0;border-radius:13px;background:#f4f4f4;gap:8px}
.thumb{width:12px;height:26px;border-radius:6px;background:#707070}
.s{flex:1}
`, `${ic('aup')}<div class="thumb"></div><div class="s"></div>${ic('adown')}`);
define('xl-sheetbar', `
:host{display:flex;align-items:flex-start;height:48px;padding:0 28px 0 15px;font-size:21px;color:#222}
.nav{width:49px;height:46px}
.tab{height:46px;padding-right:17px;margin-left:67px}
.sep{width:1px;height:28px;margin-top:10px;background:#c4c4ca}
.act{width:164px;height:42px;margin:0 6px;align-items:flex-start;background:#fff;border-radius:0 0 8px 8px;box-shadow:0 1px 2px #0002}
.act span{height:38px;line-height:40px;border-bottom:3px solid #107c41;padding:0 1px}
.plus{width:60px;height:46px;margin-left:41px}
.fill{flex:1}
.dots{width:24px;height:46px;margin-right:12px}
.hs{display:flex;align-items:center;width:711px;height:26px;margin-top:10px;padding:0 8px;border-radius:13px;background:#f4f4f4}
.thumb{width:430px;height:12px;margin:0 auto 0 158px;border-radius:6px;background:#707070}
.mark{position:absolute;right:15px;bottom:8px;font:300 15px/20px "Noto Sans CJK SC",sans-serif;color:#555;text-shadow:1px 1px 0 #fff}
`, `<button class="nav" aria-label="上一张">${ic('prev')}</button><button class="nav" aria-label="下一张">${ic('next')}</button>
<button class="tab">8月成交数据</button><i class="sep"></i><button class="act"><span>8月成交数据-2</span></button><i class="sep"></i>
<button class="plus" aria-label="新工作表">${ic('plus')}</button><div class="fill"></div><button class="dots" aria-label="调整">${ic('dots')}</button>
<div class="hs">${ic('aleft')}<div class="thumb"></div>${ic('aright')}</div><span class="mark">CSDN @毛媛媛</span>`);

define('xl-app', `
:host{display:flex;flex-direction:column;height:100vh;position:relative;background:#e4e4ea;font-family:"Noto Sans","Noto Sans CJK SC",sans-serif}
.main{display:flex;flex:1;min-height:0}
xl-sidechart{left:40px;top:26px}
xl-doughnut{left:789px;top:239px}
.cur{left:1589px;top:426px}
`, `<xl-titlebar></xl-titlebar><xl-tabs></xl-tabs><xl-ribbon></xl-ribbon><xl-formula></xl-formula>
<div class="main"><xl-grid><xl-sidechart></xl-sidechart><xl-doughnut></xl-doughnut><xl-icon class="cur" name="cursor"></xl-icon></xl-grid><xl-vscroll></xl-vscroll></div>
<xl-sheetbar></xl-sheetbar>`);
</script>
</body>
</html>
